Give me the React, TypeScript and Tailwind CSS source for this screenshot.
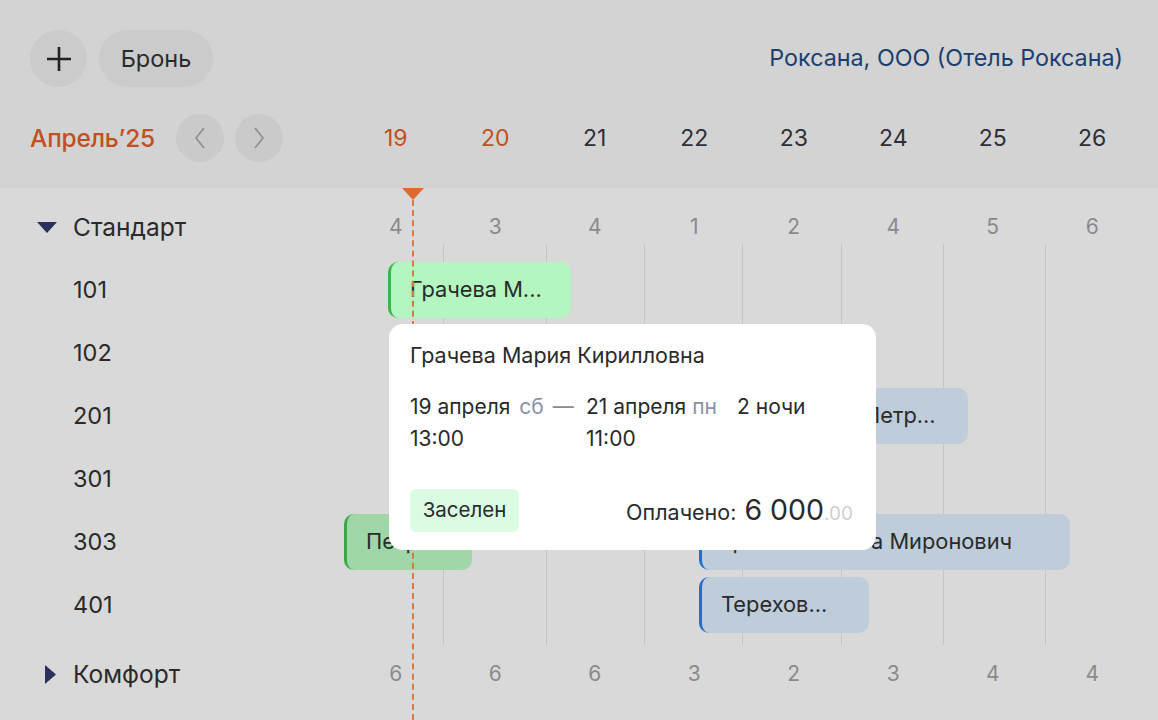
import React from "react";

const dates = [
  { d: "19", weekend: true },
  { d: "20", weekend: true },
  { d: "21" },
  { d: "22" },
  { d: "23" },
  { d: "24" },
  { d: "25" },
  { d: "26" },
];
const stdCounts = ["4", "3", "4", "1", "2", "4", "5", "6"];
const comfortCounts = ["6", "6", "6", "3", "2", "3", "4", "4"];

type Bar = { left: number; width: number; text: string; kind: "green" | "greenDim" | "blue" };
const rooms: { no: string; bars: Bar[] }[] = [
  { no: "101", bars: [{ left: 42, width: 183, text: "Грачева М...", kind: "green" }] },
  { no: "102", bars: [] },
  { no: "201", bars: [{ left: 496, width: 126, text: "Петр...", kind: "blue" }] },
  { no: "301", bars: [] },
  {
    no: "303",
    bars: [
      { left: -2, width: 128, text: "Петро...", kind: "greenDim" },
      { left: 353, width: 371, text: "Громов Никита Миронович", kind: "blue" },
    ],
  },
  { no: "401", bars: [{ left: 353, width: 170, text: "Терехов...", kind: "blue" }] },
];

const barCls: Record<Bar["kind"], string> = {
  green: "bg-[#b4f6c1] border-[#3cb54a]",
  greenDim: "bg-[#9fd7a8] border-[#3aa847]",
  blue: "bg-[#bfcddb] border-[#1f6fd0]",
};

const linePositions = [97, 200, 298, 396, 495, 597, 699];

export default function App() {
  return (
    <div className="relative w-[1158px] h-[720px] overflow-hidden bg-[#d9d9d9] font-['Inter',sans-serif] text-[#2a2a2a]">
      {/* header */}
      <header className="h-[188px] bg-[#d3d3d3] flex flex-col">
        <div className="flex items-center justify-between pl-[30px] pr-[35px] pt-[30px]">
          <div className="flex items-center gap-[12px]">
            <button className="w-[57px] h-[57px] rounded-full bg-[#cbcbcb] flex items-center justify-center">
              <svg width="28" height="28" viewBox="0 0 28 28">
                <path d="M14 2v24M2 14h24" stroke="#222" strokeWidth="2.6" strokeLinecap="butt" />
              </svg>
            </button>
            <button className="h-[57px] w-[114px] rounded-full bg-[#cbcbcb] text-[23.5px] text-[#2a2a2a]">Бронь</button>
          </div>
          <div className="text-[23.3px] text-[#1a3f6f]">Роксана, ООО (Отель Роксана)</div>
        </div>
        <div className="flex items-center mt-[27px] pr-[16px]">
          <div className="w-[346px] flex items-center pl-[30px]">
            <span className="text-[24.5px] font-medium text-[#c0501e] tracking-[-0.2px]">Апрель’25</span>
            <button className="ml-[21px] w-[48px] h-[48px] rounded-full bg-[#cacaca] flex items-center justify-center">
              <svg width="12" height="24" viewBox="0 0 12 24">
                <path d="M10 2L2 12l8 10" fill="none" stroke="#8c8c8c" strokeWidth="1.6" />
              </svg>
            </button>
            <button className="ml-[11px] w-[48px] h-[48px] rounded-full bg-[#cacaca] flex items-center justify-center">
              <svg width="12" height="24" viewBox="0 0 12 24">
                <path d="M2 2l8 10-8 10" fill="none" stroke="#8c8c8c" strokeWidth="1.6" />
              </svg>
            </button>
          </div>
          <div className="flex-1 grid grid-cols-8">
            {dates.map((x) => (
              <div
                key={x.d}
                className={`text-center text-[23px] ${x.weekend ? "text-[#c0501e]" : "text-[#2c2f38]"}`}
              >
                {x.d}
              </div>
            ))}
          </div>
        </div>
      </header>

      {/* category Standard */}
      <div className="h-[70px] flex items-center pt-[8px] pr-[16px]">
        <div className="w-[346px] flex items-center pl-[37px]">
          <svg width="20" height="11" viewBox="0 0 20 11" className="mr-[16px]">
            <path d="M0 0h20L10 11z" fill="#2b2f60" />
          </svg>
          <span className="text-[24.5px]">Стандарт</span>
        </div>
        <div className="flex-1 grid grid-cols-8">
          {stdCounts.map((c, i) => (
            <div key={i} className="text-center text-[21px] text-[#8a8a8a]">
              {c}
            </div>
          ))}
        </div>
      </div>

      {/* rooms */}
      <div className="flex pr-[16px]">
        <div className="w-[346px] flex flex-col">
          {rooms.map((r) => (
            <div key={r.no} className="h-[63px] flex items-center pl-[73px] text-[23.5px]">
              {r.no}
            </div>
          ))}
        </div>
        <div className="flex-1 relative">
          {linePositions.map((x) => (
            <div
              key={x}
              className="absolute top-[-14px] bottom-[-9px] w-px bg-[#c4c4c4]"
              style={{ left: x }}
            />
          ))}
          {rooms.map((r) => (
            <div key={r.no} className="h-[63px] relative">
              {r.bars.map((b, i) => (
                <div
                  key={i}
                  className={`absolute top-[3.5px] h-[56px] rounded-[10px] border-l-[3px] flex items-center pl-[19px] pr-[10px] text-[21.8px] text-[#2a2a2a] whitespace-nowrap overflow-hidden ${barCls[b.kind]}`}
                  style={{ left: b.left, width: b.width }}
                >
                  {b.text}
                </div>
              ))}
            </div>
          ))}
        </div>
      </div>

      {/* category Comfort */}
      <div className="h-[76px] flex items-center pr-[16px]">
        <div className="w-[346px] flex items-center pl-[45px]">
          <svg width="11" height="19" viewBox="0 0 11 19" className="mr-[17px]">
            <path d="M0 0l11 9.5L0 19z" fill="#2b2f60" />
          </svg>
          <span className="text-[24.5px]">Комфорт</span>
        </div>
        <div className="flex-1 grid grid-cols-8">
          {comfortCounts.map((c, i) => (
            <div key={i} className="text-center text-[21px] text-[#8a8a8a]">
              {c}
            </div>
          ))}
        </div>
      </div>

      {/* today marker */}
      <div className="absolute left-[402px] top-[188px] flex flex-col items-center w-[22px] h-[532px]">
        <svg width="22" height="12" viewBox="0 0 22 12">
          <path d="M0 0h22L11 12z" fill="#dc6a35" />
        </svg>
        <div className="flex-1 border-l-2 border-dashed border-[#e07640]" />
      </div>

      {/* popover */}
      <div className="absolute left-[389px] top-[324px] w-[487px] h-[226px] bg-white rounded-[14px] pl-[21px] pr-[23px] pt-[17px] flex flex-col">
        <div className="text-[21.5px] text-[#2a2a2a] leading-[28px]">Грачева Мария Кирилловна</div>
        <div className="mt-[22px] grid grid-cols-[176px_151px_auto] text-[21px] leading-[32px] text-[#2a2a2a]">
          <div className="whitespace-nowrap">
            19 апреля <span className="text-[#8992a8] ml-[3px]">сб</span>{" "}
            <span className="text-[#8a8a8a] ml-[3px]">—</span>
          </div>
          <div className="whitespace-nowrap">
            21 апреля <span className="text-[#8992a8]">пн</span>
          </div>
          <div className="whitespace-nowrap">2 ночи</div>
          <div>13:00</div>
          <div>11:00</div>
          <div />
        </div>
        <div className="mt-auto mb-[18px] flex items-center justify-between">
          <div className="h-[43px] w-[109px] justify-center rounded-[6px] bg-[#dcfbe3] flex items-center text-[20.5px] text-[#2a2a2a]">
            Заселен
          </div>
          <div className="flex items-baseline text-[#2a2a2a]">
            <span className="text-[21.5px]">Оплачено:</span>
            <span className="ml-[8px] text-[28.5px]">6 000</span>
            <span className="text-[19px] text-[#cfcfcf]">.00</span>
          </div>
        </div>
      </div>
    </div>
  );
}
